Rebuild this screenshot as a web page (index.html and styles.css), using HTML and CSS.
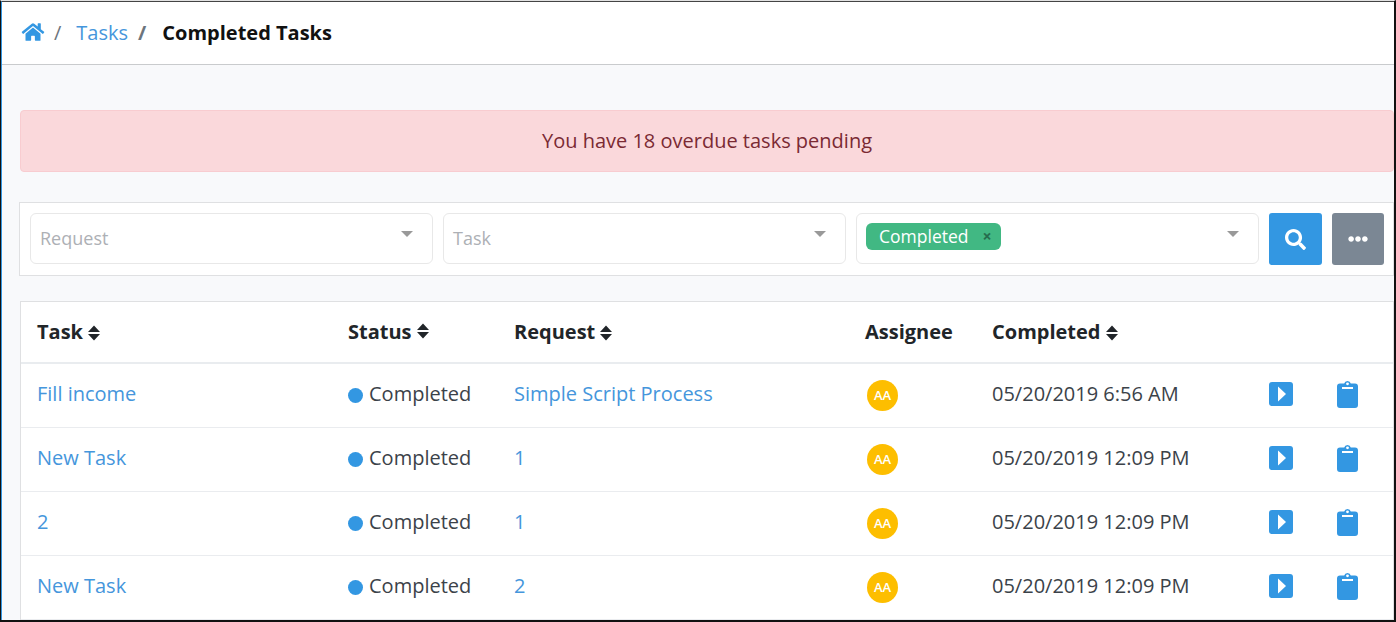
FILE: index.html
```html
<!DOCTYPE html>
<html lang="en">
<head>
<meta charset="utf-8">
<title>Completed Tasks</title>
<link rel="stylesheet" href="styles.css">
</head>
<body>
<div class="frame">
<div class="page">
  <nav class="crumbs">
    <a class="home" href="#"><svg width="24" height="20" viewBox="0 0 576 512"><path fill="currentColor" d="M280.37 148.26L96 300.11V464a16 16 0 0 0 16 16l112.06-.29a16 16 0 0 0 15.92-16V368a16 16 0 0 1 16-16h64a16 16 0 0 1 16 16v95.64a16 16 0 0 0 16 16.05L464 480a16 16 0 0 0 16-16V300L295.67 148.26a12.19 12.19 0 0 0-15.3 0zM571.6 251.47L488 182.56V44.05a12 12 0 0 0-12-12h-56a12 12 0 0 0-12 12v72.61L318.47 43a48 48 0 0 0-61 0L4.34 251.47a12 12 0 0 0-1.6 16.9l25.5 31A12 12 0 0 0 45.15 301l235.22-193.74a12.19 12.19 0 0 1 15.3 0L530.9 301a12 12 0 0 0 16.9-1.6l25.5-31a12 12 0 0 0-1.7-16.93z"/></svg></a>
    <span class="sep">/</span>
    <a class="crumb-link" href="#">Tasks</a>
    <span class="sep sep-strong">/</span>
    <strong class="crumb-current">Completed Tasks</strong>
  </nav>
  <main class="content">
    <div class="alert">You have 18 overdue tasks pending</div>
    <section class="filters">
      <div class="select"><span class="placeholder">Request</span><i class="caret"></i></div>
      <div class="select"><span class="placeholder">Task</span><i class="caret"></i></div>
      <div class="select"><span class="tag">Completed<span class="tag-x">×</span></span><i class="caret"></i></div>
      <button class="btn btn-blue"><svg width="21" height="21" viewBox="0 0 512 512"><path fill="currentColor" d="M505 442.7L405.3 343c-4.5-4.5-10.6-7-17-7H372c27.6-35.3 44-79.7 44-128C416 93.1 322.9 0 208 0S0 93.1 0 208s93.1 208 208 208c48.3 0 92.7-16.4 128-44v16.3c0 6.4 2.5 12.5 7 17l99.7 99.7c9.4 9.4 24.6 9.4 33.9 0l28.3-28.3c9.4-9.4 9.4-24.6.1-34zM208 336c-70.7 0-128-57.2-128-128 0-70.7 57.2-128 128-128 70.7 0 128 57.2 128 128 0 70.7-57.2 128-128 128z"/></svg></button>
      <button class="btn btn-gray"><svg width="20" height="20" viewBox="0 0 512 512"><path fill="currentColor" d="M328 256c0 39.8-32.2 72-72 72s-72-32.200-72-72 32.200-72 72-72 72 32.200 72 72zm104-72c-39.800 0-72 32.200-72 72s32.200 72 72 72 72-32.200 72-72-32.200-72-72-72zm-352 0c-39.800 0-72 32.200-72 72s32.200 72 72 72 72-32.200 72-72-32.200-72-72-72z"/></svg></button>
    </section>
    <section class="table-card">
      <div class="row head">
        <div class="c-task">Task <svg class="sort" viewBox="0 0 13 16"><path d="M6.500 0l6.500 7H0zM6.500 16L0 9h13z"/></svg></div>
        <div class="c-status">Status <svg class="sort" viewBox="0 0 13 16"><path d="M6.500 0l6.500 7H0zM6.500 16L0 9h13z"/></svg></div>
        <div class="c-request">Request <svg class="sort" viewBox="0 0 13 16"><path d="M6.500 0l6.500 7H0zM6.500 16L0 9h13z"/></svg></div>
        <div class="c-assignee">Assignee</div>
        <div class="c-completed">Completed <svg class="sort" viewBox="0 0 13 16"><path d="M6.500 0l6.500 7H0zM6.500 16L0 9h13z"/></svg></div>
      </div>
      <div class="row">
        <div class="c-task"><a href="#">Fill income</a></div>
        <div class="c-status"><i class="dot"></i><span class="cell-text">Completed</span></div>
        <div class="c-request"><a href="#">Simple Script Process</a></div>
        <div class="c-assignee"><span class="avatar">AA</span></div>
        <div class="c-completed">05/20/2019 6:56 AM</div>
        <div class="c-open"><svg width="24" height="24" viewBox="0 0 24 24"><rect width="24" height="24" rx="3" fill="#3397e2"/><path d="M9 4.500l8 7.500-8 7.500z" fill="#fff"/></svg></div>
        <div class="c-clip"><svg width="21" height="28" viewBox="0 0 21 28"><path fill="#3397e2" d="M3 3.500h4.200a3.400 3.400 0 0 1 6.600 0H18a3 3 0 0 1 3 3V25a3 3 0 0 1-3 3H3a3 3 0 0 1-3-3V6.500a3 3 0 0 1 3-3z"/><circle cx="10.500" cy="3.800" r="1.400" fill="#fff"/><rect x="5" y="7" width="11" height="2" fill="#fff"/></svg></div>
      </div>
      <div class="row">
        <div class="c-task"><a href="#">New Task</a></div>
        <div class="c-status"><i class="dot"></i><span class="cell-text">Completed</span></div>
        <div class="c-request"><a href="#">1</a></div>
        <div class="c-assignee"><span class="avatar">AA</span></div>
        <div class="c-completed">05/20/2019 12:09 PM</div>
        <div class="c-open"><svg width="24" height="24" viewBox="0 0 24 24"><rect width="24" height="24" rx="3" fill="#3397e2"/><path d="M9 4.500l8 7.500-8 7.500z" fill="#fff"/></svg></div>
        <div class="c-clip"><svg width="21" height="28" viewBox="0 0 21 28"><path fill="#3397e2" d="M3 3.500h4.200a3.400 3.400 0 0 1 6.600 0H18a3 3 0 0 1 3 3V25a3 3 0 0 1-3 3H3a3 3 0 0 1-3-3V6.500a3 3 0 0 1 3-3z"/><circle cx="10.500" cy="3.800" r="1.400" fill="#fff"/><rect x="5" y="7" width="11" height="2" fill="#fff"/></svg></div>
      </div>
      <div class="row">
        <div class="c-task"><a href="#">2</a></div>
        <div class="c-status"><i class="dot"></i><span class="cell-text">Completed</span></div>
        <div class="c-request"><a href="#">1</a></div>
        <div class="c-assignee"><span class="avatar">AA</span></div>
        <div class="c-completed">05/20/2019 12:09 PM</div>
        <div class="c-open"><svg width="24" height="24" viewBox="0 0 24 24"><rect width="24" height="24" rx="3" fill="#3397e2"/><path d="M9 4.500l8 7.500-8 7.500z" fill="#fff"/></svg></div>
        <div class="c-clip"><svg width="21" height="28" viewBox="0 0 21 28"><path fill="#3397e2" d="M3 3.500h4.200a3.400 3.400 0 0 1 6.600 0H18a3 3 0 0 1 3 3V25a3 3 0 0 1-3 3H3a3 3 0 0 1-3-3V6.500a3 3 0 0 1 3-3z"/><circle cx="10.500" cy="3.800" r="1.400" fill="#fff"/><rect x="5" y="7" width="11" height="2" fill="#fff"/></svg></div>
      </div>
      <div class="row">
        <div class="c-task"><a href="#">New Task</a></div>
        <div class="c-status"><i class="dot"></i><span class="cell-text">Completed</span></div>
        <div class="c-request"><a href="#">2</a></div>
        <div class="c-assignee"><span class="avatar">AA</span></div>
        <div class="c-completed">05/20/2019 12:09 PM</div>
        <div class="c-open"><svg width="24" height="24" viewBox="0 0 24 24"><rect width="24" height="24" rx="3" fill="#3397e2"/><path d="M9 4.500l8 7.500-8 7.500z" fill="#fff"/></svg></div>
        <div class="c-clip"><svg width="21" height="28" viewBox="0 0 21 28"><path fill="#3397e2" d="M3 3.500h4.200a3.400 3.400 0 0 1 6.600 0H18a3 3 0 0 1 3 3V25a3 3 0 0 1-3 3H3a3 3 0 0 1-3-3V6.500a3 3 0 0 1 3-3z"/><circle cx="10.500" cy="3.800" r="1.400" fill="#fff"/><rect x="5" y="7" width="11" height="2" fill="#fff"/></svg></div>
      </div>
    </section>
  </main>
</div>
</div>
</body>
</html>
```
FILE: styles.css
```css
* { box-sizing: border-box; }
html, body { margin: 0; height: 100%; overflow: hidden; }
body { font-family: "Open Sans", sans-serif; font-size: 20px; color: #212529; }
a { color: #4596dc; text-decoration: none; }

.frame { height: 622px; border-style: solid; border-color: #e2e2e2 #111 #111 #111; border-width: 1px 2px 2px 1px; overflow: hidden; }
.page { height: 100%; border-top: 1px solid #444; border-left: 1px solid #3397e2; background: #f8f9fb; }

.crumbs { height: 63px; background: #fff; border-bottom: 1px solid #c9cbcd; display: flex; align-items: center; padding: 0 0 2px 19px; }
.home { color: #3397e2; display: flex; }
.crumb-link { margin-left: 15px; }
.sep { color: #6c757d; margin-left: 9px; }
.sep-strong { margin-left: 10px; font-weight: 700; }
.crumb-current { margin-left: 16px; color: #111; font-weight: 700; }

.content { padding: 45px 0 0 17px; }
.alert { height: 62px; margin-left: 1px; padding-bottom: 2px; background: #fad8db; border: 1px solid #f8ccd0; border-radius: 4px; color: #7a2a33; display: flex; align-items: center; justify-content: center; }

.filters { height: 74px; margin-top: 30px; background: #fff; border: 1px solid #dfe0e2; display: flex; align-items: flex-start; padding: 10px 0 0 10px; gap: 10px; }
.select { width: 403px; height: 51px; border: 1px solid #e8e8e8; border-radius: 6px; background: #fff; display: flex; align-items: center; padding: 0 9px 2px; position: relative; }
.placeholder { color: #adb0b5; font-size: 18px; }
.caret { position: absolute; right: 19px; top: 17px; border-style: solid; border-color: #999 transparent transparent; border-width: 6.500px 6.500px 0; }
.tag { background: #41b883; color: #fff; border-radius: 6px; height: 27px; font-size: 17.500px; display: flex; align-items: center; padding: 0 9px 0 13px; margin: -3px 0 0; }
.tag-x { color: #266d4e; font-weight: 700; font-size: 16px; margin-left: 14px; }
.btn { height: 52px; border: 0; border-radius: 3px; color: #fff; display: flex; align-items: center; justify-content: center; padding: 0; }
.btn-blue { width: 53px; background: #3397e2; }
.btn-gray { width: 52px; background: #7b8794; }

.table-card { margin: 25px 0 0 1px; background: #fff; border: 1px solid #dfe0e2; }
.row { display: flex; align-items: center; height: 64px; border-bottom: 1px solid #eaecef; color: #3b4249; }
.row > div { flex: none; }
.row a { display: block; padding-bottom: 4px; }
.cell-text, .c-completed, .c-open, .c-clip { padding-bottom: 4px; }
.head { height: 62px; border-bottom: 2px solid #e9ecef; font-weight: 700; color: #212529; }
.head > div { padding-bottom: 2px; }
.c-task { width: 327px; padding-left: 16px; }
.c-status { width: 166px; display: flex; align-items: center; }
.c-request { width: 351px; }
.c-assignee { width: 127px; }
.c-completed { width: 277px; }
.c-open { width: 68px; display: flex; }
.c-clip { display: flex; }
.sort { width: 12px; height: 16px; fill: #212529; vertical-align: -2px; }
.head .c-status .sort { margin-left: 5px; }
.dot { width: 15px; height: 15px; border-radius: 50%; background: #3397e2; margin-right: 6px; flex: none; }
.avatar { display: flex; width: 31px; height: 31px; margin-left: 2px; padding-bottom: 1px; border-radius: 50%; background: #fdbe00; color: #fff; font-size: 13px; font-weight: 600; align-items: center; justify-content: center; }
```
